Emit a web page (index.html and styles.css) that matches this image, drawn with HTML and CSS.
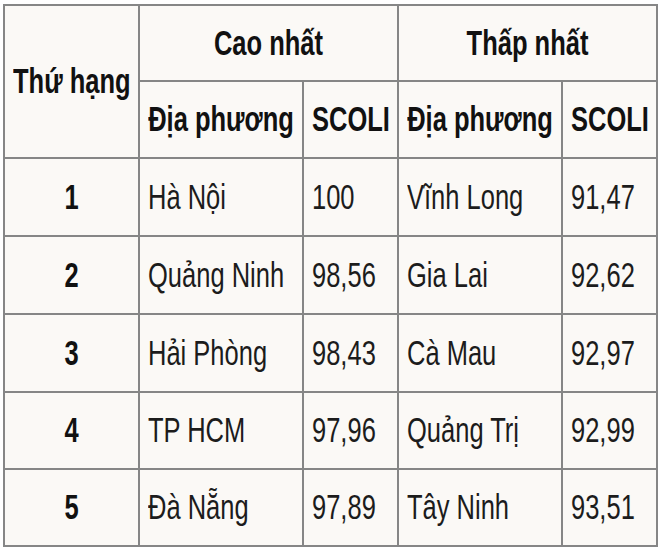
FILE: index.html
```html
<!DOCTYPE html>
<html lang="vi">
<head>
<meta charset="utf-8">
<link rel="stylesheet" href="styles.css">
</head>
<body>
<table class="rank">
  <colgroup>
    <col class="c-rank"><col class="c-name"><col class="c-score"><col class="c-name"><col class="c-score">
  </colgroup>
  <tr class="r-h1">
    <th rowspan="2" class="hd"><span class="t">Thứ hạng</span></th>
    <th colspan="2" class="hd"><span class="t">Cao nhất</span></th>
    <th colspan="2" class="hd"><span class="t">Thấp nhất</span></th>
  </tr>
  <tr class="r-h2">
    <th class="hd"><span class="t">Địa phương</span></th>
    <th class="hd"><span class="t">SCOLI</span></th>
    <th class="hd"><span class="t">Địa phương</span></th>
    <th class="hd"><span class="t">SCOLI</span></th>
  </tr>
  <tr class="r-a">
    <th class="num"><span class="t">1</span></th>
    <td><span class="t">Hà Nội</span></td>
    <td><span class="t">100</span></td>
    <td><span class="t">Vĩnh Long</span></td>
    <td><span class="t">91,47</span></td>
  </tr>
  <tr class="r-a">
    <th class="num"><span class="t">2</span></th>
    <td><span class="t">Quảng Ninh</span></td>
    <td><span class="t">98,56</span></td>
    <td><span class="t">Gia Lai</span></td>
    <td><span class="t">92,62</span></td>
  </tr>
  <tr class="r-a">
    <th class="num"><span class="t">3</span></th>
    <td><span class="t">Hải Phòng</span></td>
    <td><span class="t">98,43</span></td>
    <td><span class="t">Cà Mau</span></td>
    <td><span class="t">92,97</span></td>
  </tr>
  <tr class="r-b">
    <th class="num"><span class="t">4</span></th>
    <td><span class="t">TP HCM</span></td>
    <td><span class="t">97,96</span></td>
    <td><span class="t">Quảng Trị</span></td>
    <td><span class="t">92,99</span></td>
  </tr>
  <tr class="r-b">
    <th class="num"><span class="t">5</span></th>
    <td><span class="t">Đà Nẵng</span></td>
    <td><span class="t">97,89</span></td>
    <td><span class="t">Tây Ninh</span></td>
    <td><span class="t">93,51</span></td>
  </tr>
</table>
</body>
</html>
```
FILE: styles.css
```css
html, body {
  margin: 0;
  padding: 0;
  background: #ffffff;
}

body {
  padding: 4px 0 0 3px;
  font-family: "Liberation Sans", Arial, sans-serif;
  font-size: 25.5px;
  color: #1c1c1c;
}

.rank {
  table-layout: fixed;
  width: 653px;
  border-collapse: separate;
  border-spacing: 0;
  border-left: 2px solid #868686;
  border-top: 2px solid #868686;
  background: #fbf9f6;
}

.c-rank { width: 135px; }
.c-name { width: 164px; }
.c-score { width: 95px; }

.rank th,
.rank td {
  box-sizing: border-box;
  border-right: 2px solid #868686;
  border-bottom: 2px solid #868686;
  padding: 0 8px;
  vertical-align: middle;
  white-space: nowrap;
  overflow: hidden;
}

.rank th {
  font-weight: bold;
  text-align: center;
  color: #111111;
}

.rank td {
  text-align: left;
  font-weight: normal;
}

.r-h1 { height: 76px; }
.r-h2 { height: 77px; }
.r-a { height: 78px; }
.r-b { height: 77px; }

.t {
  display: inline-block;
  line-height: 1;
  transform: scaleY(1.35);
}
```
